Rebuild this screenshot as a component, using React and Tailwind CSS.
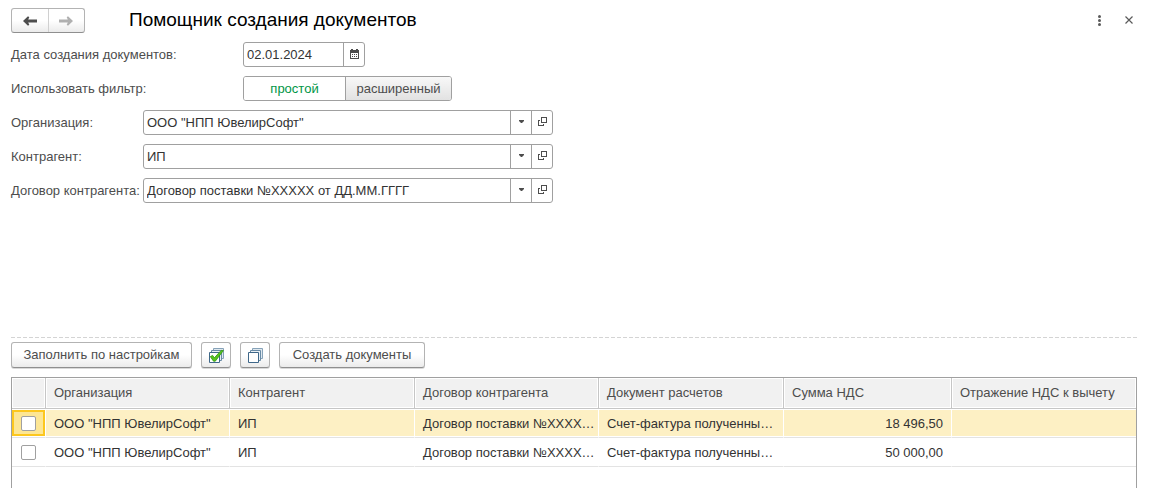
import React, { useState } from 'react';

const columns = [
  { title: 'Организация', width: 'w-[184px]' },
  { title: 'Контрагент', width: 'w-[185px]' },
  { title: 'Договор контрагента', width: 'w-[184px]' },
  { title: 'Документ расчетов', width: 'w-[185px]' },
  { title: 'Сумма НДС', width: 'w-[168px]' },
  { title: 'Отражение НДС к вычету', width: 'w-[184px]' },
];

const initialRows = [
  {
    id: 1,
    checked: false,
    organization: 'ООО "НПП ЮвелирСофт"',
    partner: 'ИП',
    contract: 'Договор поставки №XXXX…',
    document: 'Счет-фактура полученны…',
    vat: '18 496,50',
    deduction: '',
  },
  {
    id: 2,
    checked: false,
    organization: 'ООО "НПП ЮвелирСофт"',
    partner: 'ИП',
    contract: 'Договор поставки №XXXX…',
    document: 'Счет-фактура полученны…',
    vat: '50 000,00',
    deduction: '',
  },
];

const ArrowIcon = ({ className }) => (
  <svg width="14" height="10" viewBox="0 0 14 10" className={className} fill="currentColor" aria-hidden="true">
    <path d="M0 5L5 0.3L6.3 1.2L5.2 3.6H14V6.4H5.2L6.3 8.8L5 9.7Z" />
  </svg>
);

const CalendarIcon = () => (
  <svg width="9" height="10" viewBox="0 0 9 10" shapeRendering="crispEdges" aria-hidden="true">
    <path d="M0 1H9V10H0Z M1 4V9H8V4Z" fill="#4d4d4d" fillRule="evenodd" />
    <path d="M1 0H3V2H1Z M6 0H8V2H6Z" fill="#4d4d4d" />
    <path d="M2 5h1v1H2z M4 5h1v1H4z M6 5h1v1H6z M2 7h1v1H2z M4 7h1v1H4z M6 7h1v1H6z" fill="#4d4d4d" />
  </svg>
);

const OpenIcon = () => (
  <svg width="9" height="9" viewBox="0 0 9 9" fill="none" stroke="#4d4d4d" shapeRendering="crispEdges" aria-hidden="true">
    <path d="M3.5 0.5H8.5V5.5H3.5Z" />
    <path d="M2 3.5H0.5V8.5H5.5V7" />
  </svg>
);

const PagesIcon = ({ checked }) => (
  <svg width="15" height="15" viewBox="0 0 15 15" aria-hidden="true">
    <path d="M4.5 0.5H14.5V10.5H4.5Z" fill="#dfe8ef" stroke="#86a2b8" />
    <path d="M2.5 2.5H12.5V12.5H2.5Z" fill="#e9f0f5" stroke="#688aa5" />
    <path d="M0.5 4.5H10.5V14.5H0.5Z" fill="#ffffff" stroke="#3f6789" />
    {checked && (
      <path d="M1.3 8.6L3.6 7.4L5.4 9.8L12.2 2.4L14.4 2.6L6.3 13.2H4.5Z" fill="#56c41e" stroke="#2f9410" strokeWidth="0.8" />
    )}
  </svg>
);

const buttonClass =
  'flex h-[26px] items-center justify-center rounded-[3px] border border-[#b3b3b3] border-b-[#8f8f8f] bg-linear-to-b from-white from-50% to-[#ebebeb] shadow-[0_1px_0_#d9d9d9]';

const ComboField = ({ id, label, value, onChange }) => (
  <div className="flex items-center">
    <label htmlFor={id} className="w-[132px] shrink-0 whitespace-nowrap text-[#4d4d4d]">{label}</label>
    <div className="flex h-[25px] w-[410px] rounded-[3px] border border-[#a0a0a0] bg-white">
      <input
        id={id}
        value={value}
        onChange={(e) => onChange(e.target.value)}
        className="min-w-0 flex-1 px-[3px] text-[#333333] outline-none"
      />
      <button type="button" aria-label="Выбрать" className="flex w-[21px] items-center justify-center border-l border-[#a0a0a0] pb-0.5">
        <svg width="5" height="3" viewBox="0 0 5 3" aria-hidden="true">
          <path d="M0 0H5V1L3 3H2L0 1Z" fill="#4d4d4d" />
        </svg>
      </button>
      <button type="button" aria-label="Открыть" className="flex w-[21px] items-center justify-center border-l border-[#a0a0a0] pb-0.5">
        <OpenIcon />
      </button>
    </div>
  </div>
);

const App = () => {
  const [date, setDate] = useState('02.01.2024');
  const [filter, setFilter] = useState('simple');
  const [organization, setOrganization] = useState('ООО "НПП ЮвелирСофт"');
  const [partner, setPartner] = useState('ИП');
  const [contract, setContract] = useState('Договор поставки №XXXXX от ДД.ММ.ГГГГ');
  const [rows, setRows] = useState(initialRows);
  const [selectedId, setSelectedId] = useState(1);

  const setAll = (checked) => setRows(rows.map((row) => ({ ...row, checked })));

  const toggleRow = (id) => {
    setRows(rows.map((row) => (row.id === id ? { ...row, checked: !row.checked } : row)));
  };

  const filterClass = (name) =>
    filter === name ? 'bg-white text-[#009646]' : 'bg-linear-to-b from-[#f8f8f8] to-[#e2e2e2] text-[#4d4d4d]';

  return (
    <div className="flex min-h-screen flex-col bg-white pr-[19px] pl-[11px] font-['Liberation_Sans',Arial,sans-serif] text-[13px] leading-4 text-[#333333]">
      <header className="-mr-0.5 flex items-start pt-2">
        <div className="flex h-[25px] w-[74px] rounded-[3px] border border-[#b3b3b3] border-b-[#8f8f8f] bg-linear-to-b from-white from-50% to-[#ebebeb]">
          <button type="button" aria-label="Назад" className="flex flex-1 items-center justify-center text-[#4d4d4d]">
            <ArrowIcon />
          </button>
          <button type="button" aria-label="Вперед" className="flex flex-1 items-center justify-center border-l border-[#d0d0d0] text-[#b0b0b0]">
            <ArrowIcon className="rotate-180" />
          </button>
        </div>
        <h1 className="ml-11 flex-1 text-[19px] leading-6 text-black">Помощник создания документов</h1>
        <button type="button" aria-label="Еще" className="flex h-6 w-5 items-center justify-center">
          <svg width="3" height="11" viewBox="0 0 3 11" fill="#5a5a5a" aria-hidden="true">
            <circle cx="1.5" cy="1.5" r="1.5" />
            <circle cx="1.5" cy="5.5" r="1.5" />
            <circle cx="1.5" cy="9.5" r="1.5" />
          </svg>
        </button>
        <button type="button" aria-label="Закрыть" className="ml-2.5 flex h-6 w-5 items-center justify-center">
          <svg width="8" height="8" viewBox="0 0 8 8" stroke="#5a5a5a" strokeWidth="1.2" aria-hidden="true">
            <path d="M0.5 0.5L7.5 7.5M7.5 0.5L0.5 7.5" />
          </svg>
        </button>
      </header>

      <form className="flex flex-col gap-[9px] pt-[9px] pb-[134px]" onSubmit={(e) => e.preventDefault()}>
        <div className="flex items-center">
          <label htmlFor="date" className="w-[232px] text-[#4d4d4d]">Дата создания документов:</label>
          <div className="flex h-[25px] w-[122px] rounded-[3px] border border-[#a0a0a0]">
            <input
              id="date"
              value={date}
              onChange={(e) => setDate(e.target.value)}
              className="min-w-0 flex-1 px-[3px] outline-none"
            />
            <button type="button" aria-label="Календарь" className="flex w-[21px] items-center justify-center border-l border-[#a0a0a0] pb-0.5">
              <CalendarIcon />
            </button>
          </div>
        </div>
        <div className="flex items-center">
          <span className="w-[232px] text-[#4d4d4d]">Использовать фильтр:</span>
          <div className="flex h-[25px] w-[209px] overflow-hidden rounded-[3px] border border-[#a0a0a0]">
            <button type="button" onClick={() => setFilter('simple')} className={`w-[101px] ${filterClass('simple')}`}>
              простой
            </button>
            <button
              type="button"
              onClick={() => setFilter('advanced')}
              className={`flex-1 border-l border-[#a0a0a0] ${filterClass('advanced')}`}
            >
              расширенный
            </button>
          </div>
        </div>
        <ComboField id="organization" label="Организация:" value={organization} onChange={setOrganization} />
        <ComboField id="partner" label="Контрагент:" value={partner} onChange={setPartner} />
        <ComboField id="contract" label="Договор контрагента:" value={contract} onChange={setContract} />
      </form>

      <div className="h-px bg-[repeating-linear-gradient(90deg,#d4d4d4_0_4px,transparent_4px_6px)]" />

      <div className="flex gap-[9px] pt-1 pb-[9px] text-[#4d4d4d]">
        <button type="button" className={`${buttonClass} w-[181px]`}>Заполнить по настройкам</button>
        <button type="button" aria-label="Отметить все" onClick={() => setAll(true)} className={`${buttonClass} w-[30px]`}>
          <PagesIcon checked />
        </button>
        <button type="button" aria-label="Снять отметки" onClick={() => setAll(false)} className={`${buttonClass} w-[30px]`}>
          <PagesIcon />
        </button>
        <button type="button" className={`${buttonClass} w-[146px]`}>Создать документы</button>
      </div>

      <div className="flex-1 border border-b-0 border-[#a0a0a0]">
        <table className="w-full table-fixed border-separate border-spacing-0">
          <thead>
            <tr className="h-[31px] text-left text-[#4d4d4d]">
              <th aria-label="Отметка" className="w-[34px] border-r border-b border-[#c6c6c6] bg-[#f1f1f1] shadow-[inset_0_0_0_1px_#fff]" />
              {columns.map((column) => (
                <th
                  key={column.title}
                  className={`${column.width} border-r border-b border-[#c6c6c6] bg-[#f1f1f1] px-2 font-normal whitespace-nowrap shadow-[inset_0_0_0_1px_#fff] last:border-r-0`}
                >
                  {column.title}
                </th>
              ))}
            </tr>
          </thead>
          <tbody>
            {rows.map((row) => {
              const selected = row.id === selectedId;
              const cell = `border-r border-b border-r-white border-b-[#e3e3e3] px-2 pt-0.5 whitespace-nowrap shadow-[inset_0_1px_0_#fff,inset_0_-1px_0_#fff] last:border-r-0 ${selected ? 'bg-[#fdf0c4]' : ''}`;
              return (
                <tr key={row.id} className="h-[29px]" onClick={() => setSelectedId(row.id)}>
                  <td className="border-r border-b border-r-white border-b-[#e3e3e3] py-px">
                    <div className={`flex h-[26px] items-center justify-center border-2 ${selected ? 'border-[#fcc71e] bg-[#fde694]' : 'border-transparent'}`}>
                      <input
                        type="checkbox"
                        aria-label={`Отметить строку ${row.id}`}
                        checked={row.checked}
                        onChange={() => toggleRow(row.id)}
                        className="h-[15px] w-[15px] appearance-none rounded-[2px] border border-[#a0a0a0] bg-white checked:bg-[#4fb81c]"
                      />
                    </div>
                  </td>
                  <td className={cell}>{row.organization}</td>
                  <td className={cell}>{row.partner}</td>
                  <td className={cell}>{row.contract}</td>
                  <td className={cell}>{row.document}</td>
                  <td className={`${cell} text-right`}>{row.vat}</td>
                  <td className={cell}>{row.deduction}</td>
                </tr>
              );
            })}
          </tbody>
        </table>
      </div>
    </div>
  );
};

export default App;
